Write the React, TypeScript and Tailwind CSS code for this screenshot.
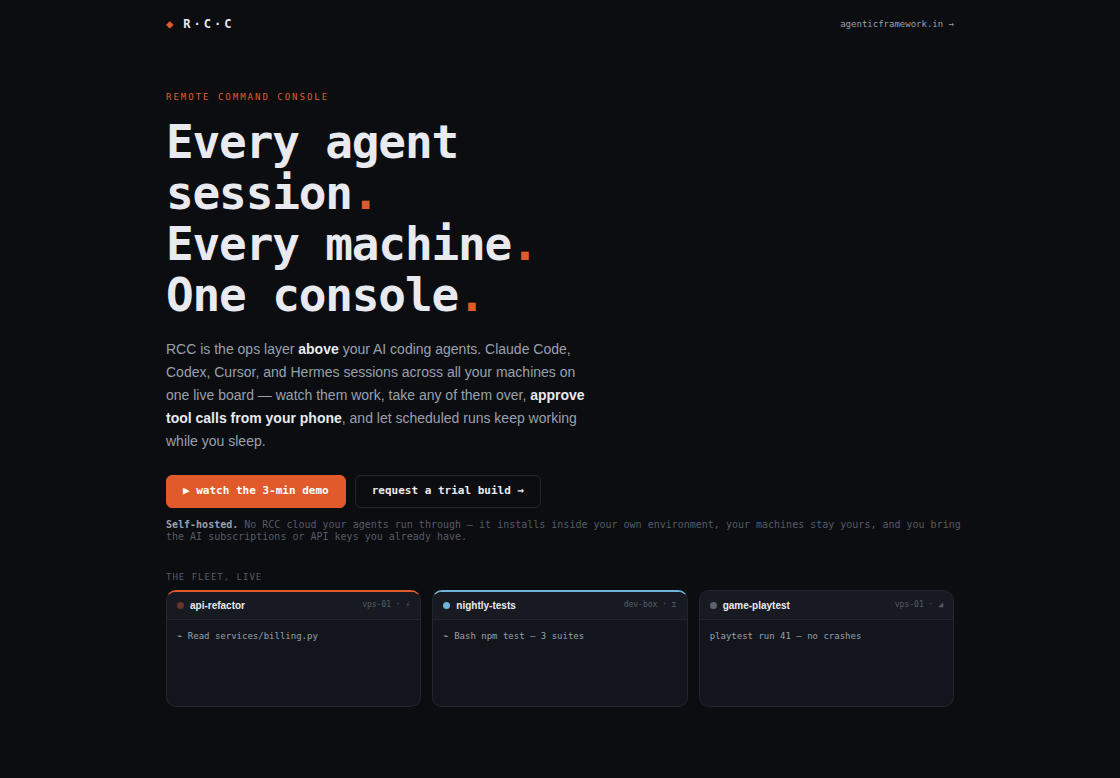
type Session = {
  name: string;
  host: string;
  icon: string;
  line: string;
  card: string;
  head: string;
  dot: string;
};

const sessions: Session[] = [
  {
    name: "api-refactor",
    host: "vps-01",
    icon: "⚡",
    line: "⌁ Read services/billing.py",
    card: "border-t-2 border-t-[#e05a2b]",
    head: "h-7 pb-px",
    dot: "bg-[#6a3527]",
  },
  {
    name: "nightly-tests",
    host: "dev-box",
    icon: "⌶",
    line: "⌁ Bash npm test — 3 suites",
    card: "border-t-2 border-t-[#6fb3d9]",
    head: "h-7 pb-px",
    dot: "bg-[#6fb3d9]",
  },
  {
    name: "game-playtest",
    host: "vps-01",
    icon: "◢",
    line: "playtest run 41 — no crashes",
    card: "border-t",
    head: "h-[29px]",
    dot: "bg-[#5d6272]",
  },
];

const Dot = () => <span className="text-[#e05a2b]">.</span>;

const SessionCard = ({ session }: { session: Session }) => (
  <article
    className={`h-[117px] overflow-hidden rounded-[10px] border-x border-b border-[#22262e] bg-[#12151c] ${session.card}`}
  >
    <header
      className={`flex items-center gap-[6px] border-b border-[#22262e] bg-[#171b21] px-[10px] ${session.head}`}
    >
      <span className={`h-[7px] w-[7px] rounded-full ${session.dot}`} />
      <h3 className="font-['Liberation_Sans',sans-serif] text-[10px] font-bold text-[#e8eaf0]">
        {session.name}
      </h3>
      <span className="ml-auto text-[8px] text-[#565b67]">
        {session.host} · {session.icon}
      </span>
    </header>
    <p className="px-[10px] py-2 text-[9px] leading-4 text-[#9aa0ae]">{session.line}</p>
  </article>
);

export default function App() {
  return (
    <div className="min-h-screen bg-[#0b0d10] font-['DejaVu_Sans_Mono',monospace] text-[#e8eaf0]">
      <div className="mx-auto max-w-[788px]">
        <header className="flex h-12 items-center justify-between">
          <div className="flex items-center gap-[10px] text-[12px] font-bold">
            <span className="text-[#e05a2b]">◆</span>
            <span className="tracking-[3px]">R·C·C</span>
          </div>
          <a href="#site" className="text-[9px] leading-3 text-[#9aa0ae]">
            agenticframework.in →
          </a>
        </header>

        <main>
          <section className="pt-[42px]">
            <p className="text-[9px] leading-[14px] tracking-[2px] text-[#e05a2b]">
              REMOTE COMMAND CONSOLE
            </p>
            <h1 className="mt-[13px] text-[46px] leading-[51px] font-bold tracking-tight">
              Every agent
              <br />
              session
              <Dot />
              <br />
              Every machine
              <Dot />
              <br />
              One console
              <Dot />
            </h1>
            <p className="mt-[17px] max-w-[420px] font-['Liberation_Sans',sans-serif] text-[14px] leading-[23px] text-[#9aa0ae]">
              RCC is the ops layer <b className="text-[#e8eaf0]">above</b> your AI coding agents.
              Claude Code, Codex, Cursor, and Hermes sessions across all your machines on one live
              board — watch them work, take any of them over,{" "}
              <b className="text-[#e8eaf0]">approve tool calls from your phone</b>, and let
              scheduled runs keep working while you sleep.
            </p>
            <div className="mt-[22px] flex flex-wrap gap-[9px] text-[11px] font-bold">
              <button
                type="button"
                className="h-[33px] rounded-[6px] border border-[#e05a2b] bg-[#e05a2b] px-4 text-white"
              >
                ▶ watch the 3-min demo
              </button>
              <button
                type="button"
                className="h-[33px] rounded-[6px] border border-[#22262e] px-4"
              >
                request a trial build →
              </button>
            </div>
            <p className="mt-[11px] -mr-2 text-[10px] leading-3 text-[#565b67]">
              <b className="text-[#9aa0ae]">Self-hosted.</b> No RCC cloud your agents run through —
              it installs inside your own environment, your machines stay yours, and you bring the
              AI subscriptions or API keys you already have.
            </p>
          </section>

          <section className="pt-[27px] pb-[71px]">
            <h2 className="text-[9px] leading-[14px] tracking-[1px] text-[#565b67]">
              THE FLEET, LIVE
            </h2>
            <div className="mt-[6px] grid grid-cols-1 gap-[11px] sm:grid-cols-3">
              {sessions.map((session) => (
                <SessionCard key={session.name} session={session} />
              ))}
            </div>
          </section>
        </main>
      </div>
    </div>
  );
}
